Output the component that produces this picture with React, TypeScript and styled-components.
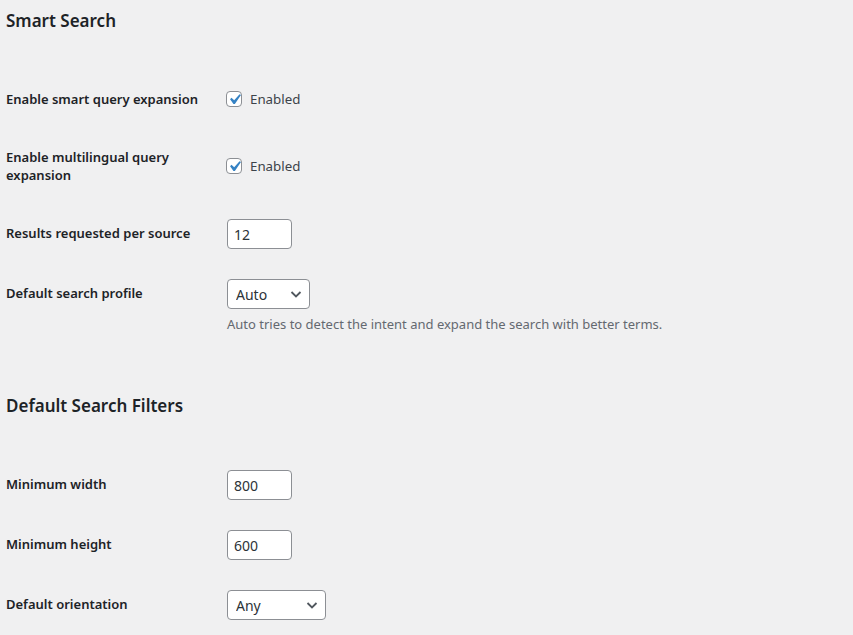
import React, { useState } from "react";
import styled, { createGlobalStyle } from "styled-components";

const GlobalStyle = createGlobalStyle`
    html, body {
        margin: 0;
        padding: 0;
        background: #f0f0f1;
    }
    body {
        color: #1d2327;
        font-family: "Segoe UI", "Noto Sans", Arial, sans-serif;
        font-size: 13px;
    }
`;

const Wrap = styled.div`
    padding: 9px 6px 0 6px;
`;

const Section = styled.section`
    & + & {
        margin-top: 46px;
    }
`;

const Heading = styled.h2`
    margin: 0 0 37px 0;
    font-size: 17px;
    line-height: 24px;
    font-weight: 600;
    color: #1d2327;
`;

const Row = styled.div<{ $center?: boolean }>`
    display: flex;
    align-items: ${(p) => (p.$center ? "center" : "flex-start")};
`;

const Th = styled.div`
    width: 200px;
    padding: 20px 10px 20px 0;
    font-size: 13px;
    line-height: 18px;
    font-weight: 600;
    color: #1d2327;
`;

const Td = styled.div`
    padding: 15px 10px;
    font-size: 13.3px;
    line-height: 18px;
    color: #3c434a;
`;

const CheckLabel = styled.label`
    display: flex;
    align-items: center;
    gap: 8px;
    cursor: pointer;
`;

const Box = styled.span`
    position: relative;
    display: inline-block;
    width: 16px;
    height: 16px;
    box-sizing: border-box;
    border: 1px solid #8c8f94;
    border-radius: 4px;
    background: #fff;
    svg {
        position: absolute;
        left: -3px;
        top: -3px;
    }
`;

const TextInput = styled.input`
    box-sizing: border-box;
    width: 65px;
    height: 30px;
    margin: 0 1px;
    padding: 0 8px 0 6px;
    border: 1px solid #8c8f94;
    border-radius: 4px;
    background: #fff;
    color: #2c3338;
    font-family: inherit;
    font-size: 14px;
    &:focus {
        outline: none;
        border-color: #2271b1;
    }
`;

const SelectWrap = styled.div<{ $w: number }>`
    position: relative;
    width: ${(p) => p.$w}px;
    margin: 0 1px;
    svg {
        position: absolute;
        right: 8px;
        top: 10px;
        pointer-events: none;
    }
`;

const Select = styled.select`
    appearance: none;
    box-sizing: border-box;
    width: 100%;
    height: 30px;
    padding: 0 24px 0 8px;
    border: 1px solid #8c8f94;
    border-radius: 4px;
    background: #fff;
    color: #2c3338;
    font-family: inherit;
    font-size: 14px;
    &:focus {
        outline: none;
    }
`;

const Description = styled.p`
    margin: 6px 0 0 1px;
    font-size: 13px;
    line-height: 18px;
    color: #646970;
`;

const Check = ({ checked, onToggle }: { checked: boolean; onToggle: () => void }) => (
    <CheckLabel onClick={onToggle}>
        <Box>
            {checked && (
                <svg width="21" height="21" viewBox="0 0 20 20">
                    <path d="M14.83 4.89l1.34.94-5.81 8.38H9.02L5.78 9.67l1.34-1.25 2.57 2.4z" fill="#3582c4" />
                </svg>
            )}
        </Box>
        Enabled
    </CheckLabel>
);

const Chevron = () => (
    <svg width="12" height="10" viewBox="0 0 12 10">
        <path d="M1.5 3l4.5 4.5L10.5 3" stroke="#50575e" strokeWidth="1.8" fill="none" />
    </svg>
);

const SelectField = ({ value, options, width }: { value: string; options: string[]; width: number }) => {
    const [val, setVal] = useState(value);
    return (
        <SelectWrap $w={width}>
            <Select value={val} onChange={(e) => setVal(e.target.value)}>
                {options.map((o) => (
                    <option key={o}>{o}</option>
                ))}
            </Select>
            <Chevron />
        </SelectWrap>
    );
};

const App = () => {
    const [expand, setExpand] = useState(true);
    const [multi, setMulti] = useState(true);
    const [perSource, setPerSource] = useState("12");
    const [minW, setMinW] = useState("800");
    const [minH, setMinH] = useState("600");

    return (
        <>
            <GlobalStyle />
            <Wrap>
                <Section>
                    <Heading>Smart Search</Heading>
                    <Row $center>
                        <Th>Enable smart query expansion</Th>
                        <Td>
                            <Check checked={expand} onToggle={() => setExpand(!expand)} />
                        </Td>
                    </Row>
                    <Row $center>
                        <Th>Enable multilingual query expansion</Th>
                        <Td>
                            <Check checked={multi} onToggle={() => setMulti(!multi)} />
                        </Td>
                    </Row>
                    <Row>
                        <Th>Results requested per source</Th>
                        <Td>
                            <TextInput value={perSource} onChange={(e) => setPerSource(e.target.value)} />
                        </Td>
                    </Row>
                    <Row>
                        <Th>Default search profile</Th>
                        <Td>
                            <SelectField value="Auto" options={["Auto", "Photo", "Illustration", "Vector"]} width={83} />
                            <Description>Auto tries to detect the intent and expand the search with better terms.</Description>
                        </Td>
                    </Row>
                </Section>
                <Section>
                    <Heading>Default Search Filters</Heading>
                    <Row>
                        <Th>Minimum width</Th>
                        <Td>
                            <TextInput value={minW} onChange={(e) => setMinW(e.target.value)} />
                        </Td>
                    </Row>
                    <Row>
                        <Th>Minimum height</Th>
                        <Td>
                            <TextInput value={minH} onChange={(e) => setMinH(e.target.value)} />
                        </Td>
                    </Row>
                    <Row>
                        <Th>Default orientation</Th>
                        <Td>
                            <SelectField value="Any" options={["Any", "Landscape", "Portrait", "Square"]} width={99} />
                        </Td>
                    </Row>
                </Section>
            </Wrap>
        </>
    );
};

export default App;
